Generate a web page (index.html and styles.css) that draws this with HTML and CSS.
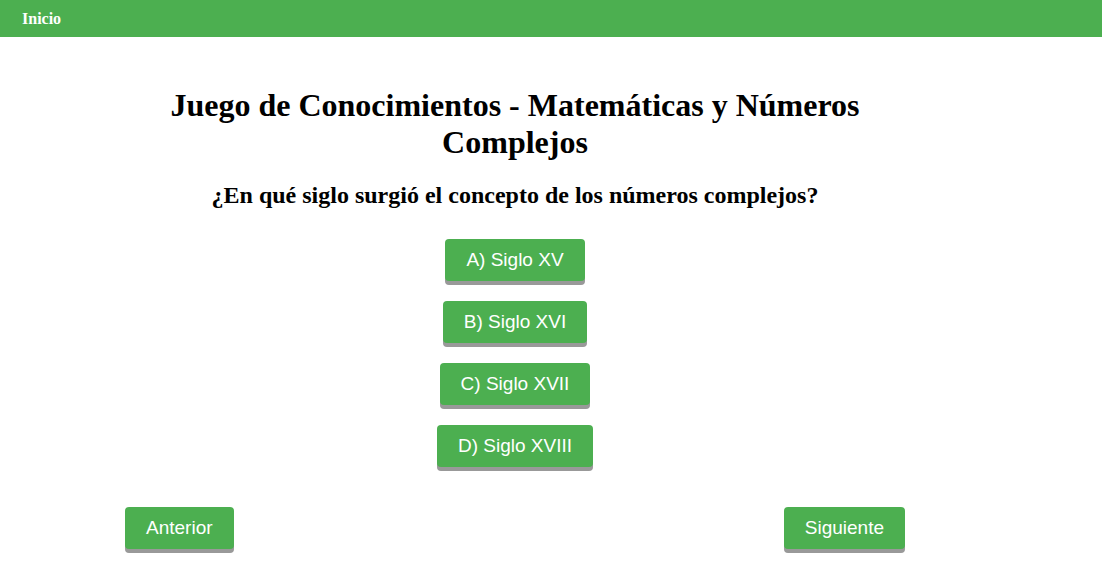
FILE: index.html
```html
<!DOCTYPE html>
<html lang="es">
<head>
<meta charset="utf-8">
<title>Juego de Conocimientos</title>
<link rel="stylesheet" href="styles.css">
</head>
<body>
<header class="topbar">
  <a class="home" href="#">Inicio</a>
</header>
<main class="game">
  <h1 class="title">Juego de Conocimientos - Matemáticas y Números Complejos</h1>
  <h2 class="question">¿En qué siglo surgió el concepto de los números complejos?</h2>
  <div class="options">
    <button class="btn">A) Siglo XV</button>
    <button class="btn">B) Siglo XVI</button>
    <button class="btn">C) Siglo XVII</button>
    <button class="btn">D) Siglo XVIII</button>
  </div>
  <div class="nav">
    <button class="btn">Anterior</button>
    <button class="btn">Siguiente</button>
  </div>
</main>
</body>
</html>
```
FILE: styles.css
```css
html, body {
  background: #fff;
}
body {
  margin: 0;
  font-family: "Liberation Serif", "Times New Roman", serif;
  color: #000;
  min-height: 576px;
}
.topbar {
  height: 37px;
  background: #4caf50;
  display: flex;
  align-items: center;
  padding-left: 22px;
}
.home {
  color: #fff;
  text-decoration: none;
  font-weight: bold;
  font-size: 16px;
}
.game {
  width: 780px;
  margin-left: 125px;
  padding-bottom: 20px;
  display: flex;
  flex-direction: column;
  align-items: center;
}
.title {
  font-size: 32px;
  line-height: 37px;
  margin: 50px 0 0;
  text-align: center;
  width: 720px;
}
.question {
  font-size: 24px;
  line-height: 27px;
  margin: 21px 0 0;
  text-align: center;
}
.options {
  display: flex;
  flex-direction: column;
  align-items: center;
  gap: 20px;
  margin-top: 30px;
}
.btn {
  background: #4caf50;
  color: #fff;
  border: none;
  border-radius: 4px;
  font-family: "Liberation Sans", Arial, sans-serif;
  font-size: 19px;
  line-height: 22px;
  padding: 10px 21px;
  box-shadow: 0 4px 0 #999;
  cursor: pointer;
}
.nav {
  align-self: stretch;
  display: flex;
  justify-content: space-between;
  align-items: flex-start;
  margin-top: 40px;
}
```
